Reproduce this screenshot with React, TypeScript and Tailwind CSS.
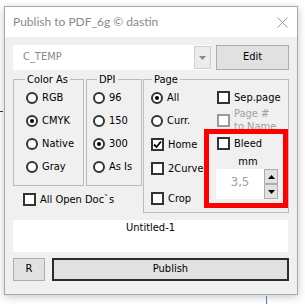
import type { ReactNode } from 'react'

const FONT = { fontFamily: '"DejaVu Sans Condensed", "DejaVu Sans", Tahoma, sans-serif' }
const TITLE_FONT = { fontFamily: 'Lato, "Liberation Sans", sans-serif' }

function Radio({ checked, label }: { checked?: boolean; label: string }) {
  return (
    <div className="flex items-center gap-[4px] h-full">
      <span className="w-[12px] h-[12px] rounded-full border-2 border-[#333] bg-white flex items-center justify-center shrink-0">
        {checked && <span className="w-[4px] h-[4px] rounded-full bg-black" />}
      </span>
      <span className="text-[11px] text-black leading-[14px] whitespace-nowrap">{label}</span>
    </div>
  )
}

function Check({ checked, disabled, children }: { checked?: boolean; disabled?: boolean; children: ReactNode }) {
  return (
    <div className="flex items-center gap-[4px] h-full">
      <span
        className={`w-[13px] h-[13px] border-2 bg-white flex items-center justify-center shrink-0 ${
          disabled ? 'border-[#9a9a9a]' : 'border-[#333]'
        }`}
      >
        {checked && (
          <svg width="9" height="9" viewBox="0 0 9 9">
            <path d="M1 4.5 L3.5 7 L8 1.5" fill="none" stroke="#000" strokeWidth="1.8" />
          </svg>
        )}
      </span>
      <span className={`text-[11px] leading-[13px] whitespace-nowrap ${disabled ? 'text-[#a0a0a0]' : 'text-black'}`}>
        {children}
      </span>
    </div>
  )
}

function Group({ title, legendClass, className, children }: { title: string; legendClass: string; className: string; children: ReactNode }) {
  return (
    <fieldset className={`border border-[#bcbcbc] ${className}`}>
      <legend className={`px-[2px] text-[11px] leading-[13px] text-black whitespace-nowrap ${legendClass}`}>
        {title}
      </legend>
      {children}
    </fieldset>
  )
}

export default function App() {
  return (
    <div className="w-[305px] h-[304px] bg-white relative overflow-hidden" style={FONT}>
      {/* window */}
      <div className="ml-[4px] mt-[6px] w-[294px] h-[289px] border border-[#a8a8a8] bg-[#f0f0f0] shadow-[0_2px_8px_rgba(0,0,0,0.22)] flex flex-col">
        <div className="h-[30px] bg-white flex items-center justify-between pl-[8px] pr-[9px]">
          <span className="text-[12px] text-[#8a8a8a]" style={TITLE_FONT}>Publish to PDF_6g © dastin</span>
          <svg width="11" height="11" viewBox="0 0 11 11">
            <path d="M0.5 0.5 L10.5 10.5 M10.5 0.5 L0.5 10.5" stroke="#999" strokeWidth="1" />
          </svg>
        </div>

        <div className="px-[8px] flex flex-col text-[11px]">
          {/* combo + edit */}
          <div className="mt-[8px] flex h-[25px] gap-[5px]">
            <div className="w-[201px] flex bg-white">
              <div className="flex-1 pl-[10px] flex items-center text-[#8a8a8a]">C_TEMP</div>
              <div className="w-[17px] my-[1px] border border-[#cfcfcf] bg-[#ececec] flex items-center justify-center">
                <svg width="7" height="4" viewBox="0 0 7 4">
                  <path d="M0 0 L7 0 L3.5 4 Z" fill="#8a8a8a" />
                </svg>
              </div>
            </div>
            <div className="w-[74px] border border-[#adadad] bg-[#e1e1e1] flex items-center justify-center text-black">
              Edit
            </div>
          </div>

          {/* groups */}
          <div className="mt-[3px] flex gap-[1px]">
            <div className="flex flex-col">
              <div className="flex gap-[2px]">
                <Group title="Color As" legendClass="ml-[11px]" className="w-[71px] h-[113px]">
                  <div className="flex flex-col pl-[12px]">
                    <div className="h-[23px]"><Radio label="RGB" /></div>
                    <div className="h-[23px]"><Radio checked label="CMYK" /></div>
                    <div className="h-[23px]"><Radio label="Native" /></div>
                    <div className="h-[23px]"><Radio label="Gray" /></div>
                  </div>
                </Group>
                <Group title="DPI" legendClass="ml-[10px]" className="w-[56px] h-[113px]">
                  <div className="flex flex-col pl-[6px]">
                    <div className="h-[23px]"><Radio label="96" /></div>
                    <div className="h-[23px]"><Radio label="150" /></div>
                    <div className="h-[23px]"><Radio checked label="300" /></div>
                    <div className="h-[23px]"><Radio label="As Is" /></div>
                  </div>
                </Group>
              </div>
              <div className="h-[26px] pl-[10px]">
                <Check>All Open Doc`s</Check>
              </div>
            </div>

            <Group title="Page" legendClass="ml-[8px]" className="w-[151px] h-[140px]">
              <div className="flex pl-[7px]">
                <div className="w-[66px] flex flex-col">
                  <div className="h-[23px]"><Radio checked label="All" /></div>
                  <div className="h-[23px]"><Radio label="Curr." /></div>
                  <div className="h-[24px]"><Check checked>Home</Check></div>
                  <div className="h-[25px]"><Check>2Curve</Check></div>
                  <div className="h-[24px] mt-[5px]"><Check>Crop</Check></div>
                </div>
                <div className="flex flex-col">
                  <div className="h-[23px]"><Check>Sep.page</Check></div>
                  <div className="h-[22px]">
                    <Check disabled>
                      <span className="block">Page #</span>
                      <span className="block">to Name</span>
                    </Check>
                  </div>
                  <div className="h-[25px]"><Check>Bleed</Check></div>
                  <div className="h-[12px] w-[62px] text-center leading-[12px] text-black">mm</div>
                  <div className="mt-[1px] -ml-[1px] h-[30px] flex">
                    <div className="w-[48px] bg-white flex items-start justify-center pt-[3px] text-[13px] text-[#a0a0a0]">3,5</div>
                    <div className="w-[14px] flex flex-col">
                      <div className="h-[15px] border border-[#adadad] bg-[#e1e1e1] flex items-center justify-center">
                        <svg width="7" height="4" viewBox="0 0 7 4"><path d="M0 4 L7 4 L3.5 0 Z" fill="#000" /></svg>
                      </div>
                      <div className="h-[15px] border border-[#adadad] bg-[#e1e1e1] flex items-center justify-center">
                        <svg width="7" height="4" viewBox="0 0 7 4"><path d="M0 0 L7 0 L3.5 4 Z" fill="#000" /></svg>
                      </div>
                    </div>
                  </div>
                </div>
              </div>
            </Group>
          </div>

          {/* document name */}
          <div className="mt-[7px] w-[275px] h-[32px] bg-white text-center leading-[16px] text-black">
            Untitled-1
          </div>

          {/* buttons */}
          <div className="mt-[6px] flex gap-[7px] h-[23px]">
            <div className="w-[32px] border border-[#adadad] bg-[#e1e1e1] flex items-center justify-center text-black">
              R
            </div>
            <div className="w-[238px] border-2 border-[#2b2b2b] bg-[#e1e1e1] flex items-center justify-center text-black">
              Publish
            </div>
          </div>
        </div>
      </div>

      {/* highlight annotation */}
      <div className="absolute left-[204px] top-[129px] w-[84px] h-[79px] border-[5px] border-[#ff0000]" />
      <div className="absolute left-[266px] top-[296px] w-[1px] h-[8px] bg-[#3b7fd6]" />
      <div className="absolute left-0 top-[111px] w-[3px] h-[1px] bg-[#333]" />
    </div>
  )
}
